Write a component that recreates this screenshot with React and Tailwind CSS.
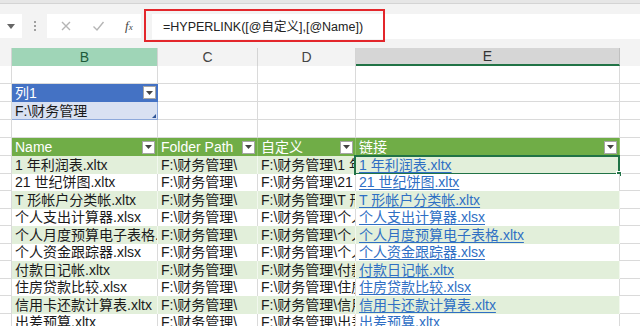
import React from "react";

const files = [
  "1 年利润表.xltx",
  "21 世纪饼图.xltx",
  "T 形帐户分类帐.xltx",
  "个人支出计算器.xlsx",
  "个人月度预算电子表格.xltx",
  "个人资金跟踪器.xlsx",
  "付款日记帐.xltx",
  "住房贷款比较.xlsx",
  "信用卡还款计算表.xltx",
  "出差预算.xltx",
];

const font = { fontFamily: '"Liberation Sans", "Noto Sans CJK SC", sans-serif' };

function Dropdown() {
  return (
    <div className="w-[13px] h-[13px] bg-white border border-[#a6a6a6] flex items-center justify-center shrink-0">
      <svg width="7" height="4" viewBox="0 0 7 4">
        <path d="M0 0h7L3.5 4z" fill="#444" />
      </svg>
    </div>
  );
}

// plain grid row outside the tables
function BlankRow({ children }) {
  return (
    <div className="flex h-[18px]">
      <div className="w-[12px] border-r border-b border-[#dadada]" />
      {children || (
        <div className="w-[146px] border-r border-b border-[#dadada]" />
      )}
      <div className="w-[100px] border-r border-b border-[#dadada]" />
      <div className="w-[98px] border-r border-b border-[#dadada]" />
      <div className="w-[264px] border-r border-b border-[#dadada]" />
      <div className="flex-1 border-b border-[#dadada]" />
    </div>
  );
}

export default function App() {
  return (
    <div className="w-[640px] h-[326px] overflow-hidden bg-white relative text-[14px] leading-[16px] text-[#1a1a1a]" style={font}>
      {/* Formula bar */}
      <div className="h-[4px] bg-[#e6e6e6] border-b border-[#d4d4d4]" />
      <div className="h-[44px] bg-[#f3f3f3] flex items-start pt-[10px]">
        <div className="w-[22px] h-[24px] bg-white flex items-center justify-center">
          <svg width="8" height="5" viewBox="0 0 8 5">
            <path d="M0 0h8L4 5z" fill="#666" />
          </svg>
        </div>
        <div className="w-[25px] h-[24px] flex flex-col items-center justify-center gap-[2px]">
          <span className="w-[2px] h-[2px] bg-[#a0a0a0]" />
          <span className="w-[2px] h-[2px] bg-[#a0a0a0]" />
          <span className="w-[2px] h-[2px] bg-[#a0a0a0]" />
        </div>
        <div className="w-[94px] h-[24px] bg-white flex items-center">
          <svg width="12" height="12" viewBox="0 0 12 12" className="ml-[13px]">
            <path d="M2 2l8 8M10 2l-8 8" stroke="#b5b5b5" strokeWidth="1.4" />
          </svg>
          <svg width="13" height="12" viewBox="0 0 13 12" className="ml-[20px]">
            <path d="M1.5 6.5l3.5 3.5 6.5-8" stroke="#b5b5b5" strokeWidth="1.4" fill="none" />
          </svg>
          <span className="ml-[20px] italic text-[13px] text-[#444]" style={{ fontFamily: '"Liberation Serif", serif' }}>
            f<span className="text-[9px]">x</span>
          </span>
        </div>
        <div className="w-[11px]" />
        <div className="flex-1 h-[25px] bg-white flex items-center pl-[11px] text-[12.5px] text-[#222]">
          =HYPERLINK([@自定义],[@Name])
        </div>
      </div>

      {/* Column headers */}
      <div className="flex h-[18px] bg-[#f3f3f3] text-[14px] text-[#444]">
        <div className="w-[12px] border-r border-[#d4d4d4]" />
        <div className="w-[146px] bg-[#9fd5b7] text-[#1d5b3a] border-r border-[#d4d4d4] flex items-center justify-center">B</div>
        <div className="w-[100px] border-r border-[#d4d4d4] flex items-center justify-center">C</div>
        <div className="w-[98px] border-r border-[#d4d4d4] flex items-center justify-center">D</div>
        <div className="w-[264px] bg-[#d6d6d6] border-r border-[#c0c0c0] border-b-2 border-b-[#217346] flex items-center justify-center text-[#333]">E</div>
        <div className="flex-1" />
      </div>

      {/* Rows above the main table */}
      <BlankRow />
      <BlankRow>
        <div className="w-[146px] h-full bg-[#4472c4] text-white flex items-center justify-between pl-[3px] pr-[2px] border-b border-[#4472c4]">
          <span>列1</span>
          <Dropdown />
        </div>
      </BlankRow>
      <BlankRow>
        <div className="w-[146px] h-full bg-[#d9e1f2] border-b border-r border-[#8ea9db] flex items-center pl-[3px] relative">
          <span>F:\财务管理</span>
          <svg width="4" height="4" viewBox="0 0 4 4" className="absolute right-[1px] bottom-[1px]">
            <path d="M4 0v4H0z" fill="#2f5597" />
          </svg>
        </div>
      </BlankRow>
      <BlankRow />

      {/* Table header */}
      <div className="flex h-[18px]">
        <div className="w-[12px] border-r border-b border-[#dadada]" />
        {[
          ["Name", "w-[146px]"],
          ["Folder Path", "w-[100px]"],
          ["自定义", "w-[98px]"],
          ["链接", "w-[264px]"],
        ].map(([label, w]) => (
          <div key={label} className={`${w} bg-[#70ad47] text-white flex items-center justify-between pl-[3px] pr-[2px] border-r border-[#8cc068]`}>
            <span>{label}</span>
            <Dropdown />
          </div>
        ))}
        <div className="flex-1 border-b border-[#dadada]" />
      </div>

      {/* Table body */}
      {files.map((name, i) => {
        const band = i % 2 === 0;
        const cell = band ? "bg-[#e2efda] border-r border-[#f2f8ee]" : "bg-white border-r border-[#dadada]";
        return (
          <div key={name} className="flex h-[17.5px]">
            <div className="w-[12px] border-r border-b border-[#dadada]" />
            <div className={`w-[146px] ${cell} pl-[3px] flex items-center overflow-hidden whitespace-nowrap`}>{name}</div>
            <div className={`w-[100px] ${cell} pl-[3px] flex items-center overflow-hidden whitespace-nowrap`}>F:\财务管理\</div>
            <div className={`w-[98px] ${cell} pl-[3px] flex items-center overflow-hidden whitespace-nowrap`}>F:\财务管理\{name}</div>
            <div className={`w-[264px] ${cell} pl-[3px] flex items-center whitespace-nowrap relative`}>
              <span className="text-[#2f6fc4] underline underline-offset-[2px]">{name}</span>
              {i === 0 && (
                <div className="absolute -left-[2px] -top-[1px] -right-[1px] -bottom-[1px] border-2 border-[#217346]">
                  <div className="absolute -right-[4px] -bottom-[4px] w-[6px] h-[6px] bg-[#217346] border border-white" />
                </div>
              )}
            </div>
            <div className="flex-1 border-b border-[#dadada]" />
          </div>
        );
      })}

      {/* Annotation box around the formula */}
      <div className="absolute left-[144px] top-[9px] w-[241px] h-[33px] border-2 border-[#e3262b]" />
    </div>
  );
}
